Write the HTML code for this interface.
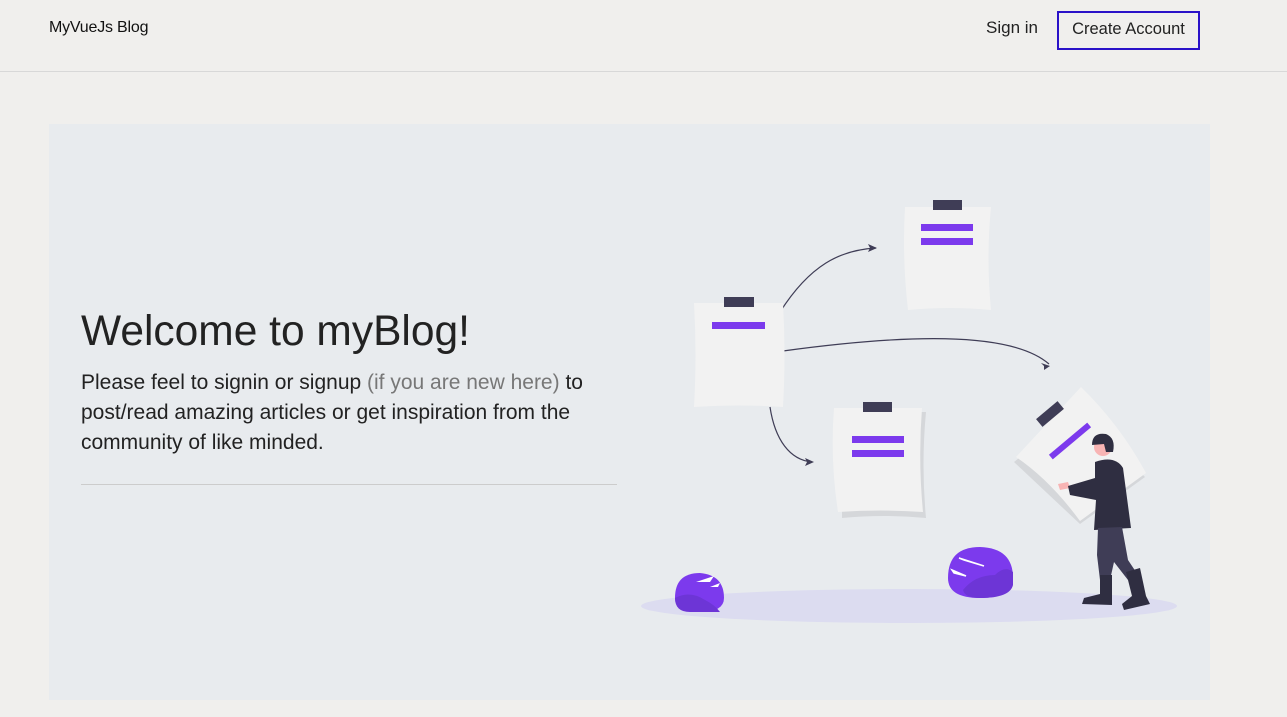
<!DOCTYPE html>
<html><head><meta charset="utf-8"><style>
body{margin:0;width:1287px;height:717px;background:#f0efed;font-family:"Liberation Sans",sans-serif;overflow:hidden;position:relative}
.hdr{position:absolute;left:0;top:0;width:1287px;height:71px;border-bottom:1px solid #d8d8d8}
.logo{position:absolute;left:49px;top:19px;font-size:16px;color:#111;letter-spacing:-0.2px}
.signin{position:absolute;left:986px;top:18px;font-size:17px;color:#222}
.btn{position:absolute;left:1057px;top:11px;width:139px;height:35px;border:2px solid #2a12c8;font-size:16.5px;color:#222;text-align:center;line-height:33px}
.card{position:absolute;left:49px;top:124px;width:1161px;height:576px;background:#e8ebee}
h1{position:absolute;left:81px;top:308px;margin:0;font-weight:normal;font-size:42.5px;color:#222}
p{position:absolute;left:81px;top:368px;margin:0;width:540px;font-size:21px;line-height:30px;color:#222}
p span{color:#777}
.hr{position:absolute;left:81px;top:484px;width:536px;height:1px;background:#ccc}
svg{position:absolute;left:0;top:0}
</style></head><body>
<div class="hdr"><div class="logo">MyVueJs Blog</div><div class="signin">Sign in</div><div class="btn">Create Account</div></div>
<div class="card"></div>
<h1>Welcome to myBlog!</h1>
<p>Please feel to signin or signup <span>(if you are new here)</span> to post/read amazing articles or get inspiration from the community of like minded.</p>
<div class="hr"></div>
<svg width="1287" height="717">
<ellipse cx="909" cy="606" rx="268" ry="17" fill="#dcdcf0"/>
<g fill="none" stroke="#3f3d56" stroke-width="1.2">
<path d="M780 312 C810 265 840 250 876 248"/>
<path d="M783 351 C900 335 1010 330 1049 364"/>
<path d="M770 407 C775 440 790 460 812 462"/>
</g>
<g fill="#3f3d56"><path d="M877 248 l-9 -4 l2 4 l-2 4z"/><path d="M1050 366 l-9 -3 l3 3 l0 4z"/><path d="M814 462 l-9 -4 l2 4 l-2 4z"/></g>
<path d="M694 303 H783 Q786 355 783 407 Q740 404 694 407 Q697 355 694 303Z" fill="#f2f2f2"/>
<rect x="724" y="297" width="30" height="10" fill="#3f3d56"/>
<rect x="712" y="322" width="53" height="7" fill="#7c3aed"/>
<path d="M905 207 H991 Q986 258 991 310 Q950 306 908 310 Q902 258 905 207Z" fill="#f2f2f2"/>
<rect x="933" y="200" width="29" height="10" fill="#3f3d56"/>
<rect x="921" y="224" width="52" height="7" fill="#7c3aed"/><rect x="921" y="238" width="52" height="7" fill="#7c3aed"/>
<path d="M842 412 H926 Q921 465 926 518 Q884 514 842 518Z" fill="#d5d7da"/>
<path d="M834 408 H922 Q918 460 923 512 Q880 509 838 512 Q830 460 834 408Z" fill="#f2f2f2"/>
<rect x="863" y="402" width="29" height="10" fill="#3f3d56"/>
<rect x="852" y="436" width="52" height="7" fill="#7c3aed"/><rect x="852" y="450" width="52" height="7" fill="#7c3aed"/>
<path d="M1014 462 L1080 524 L1145 477 L1080 410Z" fill="#d5d7da"/>
<path d="M1016 457 L1081 387 Q1120 425 1146 473 L1080 521 Q1050 480 1016 457Z" fill="#f2f2f2"/>
<rect x="1036" y="409" width="28" height="10" transform="rotate(-40 1050 414)" fill="#3f3d56"/>
<rect x="1045" y="438" width="50" height="6" transform="rotate(-40 1070 441)" fill="#7c3aed"/>
<path d="M1058 484 l10 -2 l2 6 l-10 2z" fill="#f8b4b4"/>
<path d="M1095 462 Q1115 455 1123 468 L1131 528 L1094 530 L1096 500 L1070 495 L1068 486 L1095 478Z" fill="#2f2e41"/>
<circle cx="1103" cy="447" r="9" fill="#f8b4b4"/>
<path d="M1092 445 Q1092 432 1106 434 Q1116 438 1113 452 L1106 452 L1104 444Z" fill="#2f2e41"/>
<path d="M1098 528 L1122 527 L1128 560 L1140 578 L1128 580 L1114 562 L1110 580 L1100 580 L1097 555Z" fill="#3f3d56"/>
<path d="M1100 575 L1112 575 L1112 605 L1082 604 L1084 598 L1100 594Z" fill="#2f2e41"/>
<path d="M1126 572 L1140 568 L1146 596 L1150 604 L1124 610 L1122 604 L1132 596Z" fill="#2f2e41"/>
<path d="M675 598 Q675 573 700 573 Q724 575 724 598 Q724 612 700 612 Q675 612 675 598Z" fill="#7c3aed"/>
<path d="M675 598 Q690 590 705 600 Q715 605 720 612 L690 612 Q675 612 675 598Z" fill="#6d35d6"/>
<path d="M696 582 L714 576 L710 582Z M710 587 L720 583 L718 587Z" fill="#fff"/>
<path d="M948 578 Q948 547 980 547 Q1013 548 1013 578 Q1013 598 980 598 Q948 598 948 578Z" fill="#7c3aed"/>
<path d="M963 590 Q975 575 995 575 Q1005 565 1013 572 L1013 585 Q1010 598 980 598Q965 598 963 590Z" fill="#6d35d6"/>
<path d="M959 558 L984 566 L964 560Z M952 570 L966 576 L954 573Z" fill="#fff" stroke="#fff" stroke-width="1.5"/>
</svg>
</body></html>
